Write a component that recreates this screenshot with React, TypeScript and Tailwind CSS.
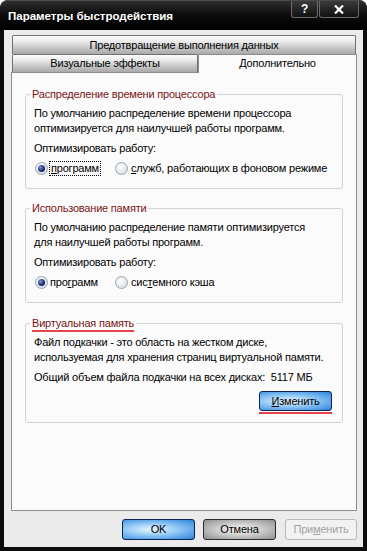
import React from "react";

function Radio({ checked }: { checked?: boolean }) {
  return (
    <span className="flex h-[13px] w-[13px] shrink-0 items-center justify-center rounded-full border border-[#9aa4ae] bg-[radial-gradient(circle_at_40%_35%,#ffffff,#dfe3e7_70%,#c7ccd2)]">
      {checked ? (
        <span className="h-[7px] w-[7px] rounded-full bg-[radial-gradient(circle_at_35%_35%,#7d8fd6,#1b2a6e_60%,#0a1440)]" />
      ) : null}
    </span>
  );
}

function Group({
  title,
  marked,
  className = "",
  children,
}: {
  title: string;
  marked?: boolean;
  className?: string;
  children: React.ReactNode;
}) {
  return (
    <fieldset className={`rounded-[3px] border border-[#d3d3cf] px-[4px] pb-[12px] ${className}`}>
      <legend className="px-[2px] leading-[14px] text-[#7a1414]">
        <span
          className={
            marked ? "underline decoration-[#e2454b] decoration-2 underline-offset-[3px]" : ""
          }
        >
          {title}
        </span>
      </legend>
      <div className="pl-[4px] pt-[5px]">{children}</div>
    </fieldset>
  );
}

export default function App() {
  return (
    <div className="flex h-[551px] w-[367px] flex-col overflow-hidden whitespace-nowrap rounded-t-[8px] bg-[#0c0c0c] font-['Liberation_Sans',Arial,sans-serif] text-[11px] leading-[15px] tracking-[-0.2px] text-black">
      {/* Title bar */}
      <div className="flex h-[30px] shrink-0 items-start justify-between rounded-t-[8px] border-t border-[#4a4a4a] bg-[linear-gradient(to_bottom,#2e2e2e,#0d0d0d_45%,#000)]">
        <span className="pl-[8px] pt-[8px] text-[11.5px] font-bold tracking-[0px] text-white">
          Параметры быстродействия
        </span>
        <div className="mr-[8px] flex gap-[1px]">
          <span className="flex h-[17px] w-[27px] items-center justify-center rounded-b-[3px] border border-t-0 border-[#6a6a6a] bg-[linear-gradient(to_bottom,#3a3a3a,#111)] text-[12px] font-bold text-white">
            ?
          </span>
          <span className="flex h-[17px] w-[40px] items-center justify-center rounded-b-[3px] border border-t-0 border-[#6a6a6a] bg-[linear-gradient(to_bottom,#3a3a3a,#111)]">
            <svg width="10" height="9" viewBox="0 0 10 9">
              <path d="M1 0.5 L9 8.5 M9 0.5 L1 8.5" stroke="#fff" strokeWidth="2.2" />
            </svg>
          </span>
        </div>
      </div>

      {/* Client area */}
      <div className="mx-[4px] mb-[4px] flex flex-1 flex-col bg-[#ebebeb] pb-[7px] pl-[7px] pr-[6px] pt-[5px]">
        {/* Tabs */}
        <div className="mx-[1px] flex h-[19px] items-center justify-center rounded-t-[2px] border border-b-0 border-[#707070] bg-[linear-gradient(to_bottom,#fdfdfd,#ececec_30%,#c2c2c2_70%,#a9a9a9)]">
          Предотвращение выполнения данных
        </div>
        <div className="flex h-[18px]">
          <div className="ml-[1px] flex w-[186px] items-center justify-center rounded-t-[2px] border border-b-0 border-[#707070] bg-[linear-gradient(to_bottom,#fdfdfd,#ececec_30%,#c2c2c2_70%,#a9a9a9)]">
            Визуальные эффекты
          </div>
          <div className="relative z-10 flex h-[19px] flex-1 items-center justify-center border border-b-0 border-[#8a8f94] bg-[#fbfbfb] pb-[1px]">
            Дополнительно
          </div>
        </div>

        {/* Tab page */}
        <div className="flex flex-1 flex-col border border-[#8a8f94] bg-[#fbfbfb] px-[13px] pt-[14px]">
          <Group title="Распределение времени процессора">
            <p>По умолчанию распределение времени процессора</p>
            <p>оптимизируется для наилучшей работы программ.</p>
            <p className="mt-[5px]">Оптимизировать работу:</p>
            <div className="mt-[5px] flex items-center">
              <div className="ml-[1px] flex w-[80px] items-center gap-[1px]">
                <Radio checked />
                <span className="border border-dotted border-black px-[1px] leading-[13px]">
                  <u>п</u>рограмм
                </span>
              </div>
              <div className="flex items-center gap-[3px]">
                <Radio />
                <span>
                  <u>с</u>лужб, работающих в фоновом режиме
                </span>
              </div>
            </div>
          </Group>

          <Group title="Использование памяти" className="mt-[12px]">
            <p>По умолчанию распределение памяти оптимизируется</p>
            <p>для наилучшей работы программ.</p>
            <p className="mt-[5px]">Оптимизировать работу:</p>
            <div className="mt-[5px] flex items-center">
              <div className="ml-[1px] flex w-[80px] items-center gap-[2px]">
                <Radio checked />
                <span>
                  про<u>г</u>рамм
                </span>
              </div>
              <div className="flex items-center gap-[3px]">
                <Radio />
                <span>
                  сис<u>т</u>емного кэша
                </span>
              </div>
            </div>
          </Group>

          <Group title="Виртуальная память" marked className="mt-[13px] !pb-[8px]">
            <p>Файл подкачки - это область на жестком диске,</p>
            <p>используемая для хранения страниц виртуальной памяти.</p>
            <p className="mt-[5px]">Общий объем файла подкачки на всех дисках:&nbsp; 5117 МБ</p>
            <div className="mr-[6px] mt-[6px] flex flex-col items-end">
              <button className="flex h-[20px] w-[73px] items-center justify-center rounded-[3px] border border-[#0b2553] bg-[radial-gradient(ellipse_at_40%_50%,#eaf7ff_0%,#a4d3f8_35%,#4f9ce6_80%,#2f7ed7_100%)]">
                <span>
                  <u>И</u>зменить
                </span>
              </button>
              <div className="mt-[1px] h-[2px] w-[73px] bg-[#e2454b]" />
            </div>
          </Group>
        </div>

        {/* Dialog buttons */}
        <div className="mt-[8px] flex h-[21px] justify-end gap-[8px]">
          <button className="flex w-[73px] items-center justify-center rounded-[3px] border border-[#0b2553] bg-[radial-gradient(ellipse_at_40%_50%,#eaf7ff_0%,#a4d3f8_35%,#4f9ce6_80%,#2f7ed7_100%)]">
            OK
          </button>
          <button className="flex w-[73px] items-center justify-center rounded-[3px] border border-[#2b2b2b] bg-[radial-gradient(ellipse_at_50%_50%,#f7f7f7_0%,#cdcdcd_45%,#8f8f8f_100%)]">
            Отмена
          </button>
          <button className="ml-[1px] flex w-[72px] items-center justify-center rounded-[3px] border border-[#b8b8b8] bg-[#f2f2f2] text-[#a2a2a2]">
            <span>
              При<u>м</u>енить
            </span>
          </button>
        </div>
      </div>
    </div>
  );
}
